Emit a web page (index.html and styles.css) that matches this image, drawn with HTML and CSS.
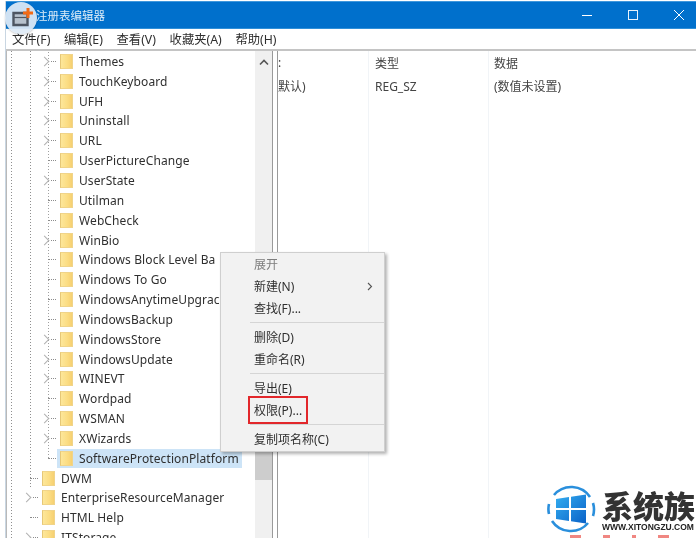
FILE: index.html
```html
<!DOCTYPE html>
<html lang="zh-CN">
<head>
<meta charset="utf-8">
<title>注册表编辑器</title>
<link rel="stylesheet" href="styles.css">
</head>
<body>
<div class="page">
<div class="window">
  <header class="titlebar">
    <span class="title">注册表编辑器</span>
    <div class="controls">
      <svg width="12" height="12" viewBox="0 0 12 12"><path d="M1 6.500h10" stroke="#fff" fill="none"/></svg>
      <svg width="12" height="12" viewBox="0 0 12 12"><rect x="1.500" y="1.500" width="9" height="9" stroke="#e8f2fb" fill="none"/></svg>
      <svg width="12" height="12" viewBox="0 0 12 12"><path d="M1 1l10 10M11 1L1 11" stroke="#fff" fill="none"/></svg>
    </div>
  </header>
  <nav class="menubar">
    <span>文件(F)</span><span>编辑(E)</span><span>查看(V)</span><span>收藏夹(A)</span><span>帮助(H)</span>
  </nav>
  <main class="panes">
    <section class="tree">
      <div class="list">
        <div class="sub">
          <div class="row arrow"><i class="chev"></i><div class="node"><i class="folder"></i><span>Themes</span></div></div>
          <div class="row arrow"><i class="chev"></i><div class="node"><i class="folder"></i><span>TouchKeyboard</span></div></div>
          <div class="row arrow"><i class="chev"></i><div class="node"><i class="folder"></i><span>UFH</span></div></div>
          <div class="row arrow"><i class="chev"></i><div class="node"><i class="folder"></i><span>Uninstall</span></div></div>
          <div class="row arrow"><i class="chev"></i><div class="node"><i class="folder"></i><span>URL</span></div></div>
          <div class="row"><i class="chev none"></i><div class="node"><i class="folder"></i><span>UserPictureChange</span></div></div>
          <div class="row arrow"><i class="chev"></i><div class="node"><i class="folder"></i><span>UserState</span></div></div>
          <div class="row"><i class="chev none"></i><div class="node"><i class="folder"></i><span>Utilman</span></div></div>
          <div class="row"><i class="chev none"></i><div class="node"><i class="folder"></i><span>WebCheck</span></div></div>
          <div class="row arrow"><i class="chev"></i><div class="node"><i class="folder"></i><span>WinBio</span></div></div>
          <div class="row"><i class="chev none"></i><div class="node"><i class="folder"></i><span>Windows Block Level Ba</span></div></div>
          <div class="row"><i class="chev none"></i><div class="node"><i class="folder"></i><span>Windows To Go</span></div></div>
          <div class="row"><i class="chev none"></i><div class="node"><i class="folder"></i><span>WindowsAnytimeUpgrac</span></div></div>
          <div class="row"><i class="chev none"></i><div class="node"><i class="folder"></i><span>WindowsBackup</span></div></div>
          <div class="row arrow"><i class="chev"></i><div class="node"><i class="folder"></i><span>WindowsStore</span></div></div>
          <div class="row arrow"><i class="chev"></i><div class="node"><i class="folder"></i><span>WindowsUpdate</span></div></div>
          <div class="row arrow"><i class="chev"></i><div class="node"><i class="folder"></i><span>WINEVT</span></div></div>
          <div class="row"><i class="chev none"></i><div class="node"><i class="folder"></i><span>Wordpad</span></div></div>
          <div class="row arrow"><i class="chev"></i><div class="node"><i class="folder"></i><span>WSMAN</span></div></div>
          <div class="row arrow"><i class="chev"></i><div class="node"><i class="folder"></i><span>XWizards</span></div></div>
          <div class="row"><i class="chev none"></i><div class="node selected"><i class="folder"></i><span>SoftwareProtectionPlatform</span></div></div>
        </div>
        <div class="row up"><i class="chev none"></i><div class="node"><i class="folder"></i><span>DWM</span></div></div>
        <div class="row up arrow"><i class="chev"></i><div class="node"><i class="folder"></i><span>EnterpriseResourceManager</span></div></div>
        <div class="row up"><i class="chev none"></i><div class="node"><i class="folder"></i><span>HTML Help</span></div></div>
        <div class="row up arrow"><i class="chev"></i><div class="node"><i class="folder"></i><span>ITStorage</span></div></div>
      </div>
      <div class="scrollbar">
        <svg width="10" height="7" viewBox="0 0 10 7"><path d="M1 5.500l4-4 4 4" stroke="#555" stroke-width="1.600" fill="none"/></svg>
        <div class="thumb"></div>
      </div>
    </section>
    <section class="values">
      <div class="col c1"><div class="cell">:</div><div class="cell">默认)</div></div>
      <div class="col c2"><div class="cell">类型</div><div class="cell">REG_SZ</div></div>
      <div class="col c3"><div class="cell">数据</div><div class="cell">(数值未设置)</div></div>
    </section>
  </main>
</div>

<div class="badge">
  <svg width="24" height="20" viewBox="0 0 24 20">
    <path d="M2.500 5h14v12h-14z" fill="#b7c1cc" stroke="#4d5561" stroke-width="2.400"/>
    <path d="M3 9.500h13" stroke="#4d5561" stroke-width="1.200"/>
    <path d="M17 0v10M12 5h10" stroke="#f26a16" stroke-width="3"/>
  </svg>
</div>

<div class="menu">
  <div class="item muted">展开</div>
  <div class="item"><span>新建(N)</span><svg width="6" height="9" viewBox="0 0 6 9"><path d="M1 1l3.500 3.500L1 8" stroke="#555" stroke-width="1.100" fill="none"/></svg></div>
  <div class="item">查找(F)...</div>
  <hr>
  <div class="item">删除(D)</div>
  <div class="item">重命名(R)</div>
  <hr>
  <div class="item">导出(E)</div>
  <div class="item"><span class="ring">权限(P)...</span></div>
  <hr>
  <div class="item">复制项名称(C)</div>
</div>

<div class="logo">
  <svg width="50" height="50" viewBox="0 0 50 50">
    <defs><linearGradient id="w" x1="0" y1="0" x2="1" y2="1"><stop offset="0" stop-color="#35aef0"/><stop offset="1" stop-color="#0a62c8"/></linearGradient></defs>
    <path d="M8 11A22.500 22.500 0 0 1 44 13" stroke="#2a8fdc" stroke-width="2.600" fill="none"/>
    <path d="M42 39A22.500 22.500 0 0 1 6 37M3 20A22 22 0 0 0 3 30" stroke="#2a8fdc" stroke-width="2.600" fill="none"/>
    <path d="M47 19a22 22 0 0 1 0 13" stroke="#2a8fdc" stroke-width="2.600" fill="none"/>
    <path d="M10 15l13-2v11H10zM25 12.700l15-2.200V24H25zM10 26h13v11l-13-2zM25 26h15v13.500l-15-2.200z" fill="url(#w)"/>
  </svg>
  <div class="brand">
    <span class="cn">系统族</span>
    <span class="url">WWW.XITONGZU.COM</span>
  </div>
</div>
<div class="marks"><i></i><i></i><i></i><i></i></div>
</div>
</body>
</html>
```
FILE: styles.css
```css
* { box-sizing: border-box; }
html, body { margin: 0; padding: 0; }
body { background: #fff; overflow: hidden; }
.page {
  width: 696px;
  height: 538px;
  overflow: hidden;
  position: relative;
  background: #fff;
  color: #2f2f2f;
  font: 12px "Noto Sans", "Noto Sans CJK SC", sans-serif;
  filter: blur(0.35px);
}
.window {
  margin: 1px 0 0 5px;
  height: 537px;
  border-left: 1px solid #c9d6e2;
  display: flex;
  flex-direction: column;
}
.titlebar {
  height: 28px;
  flex: none;
  background: #0070cc;
  border-top: 1px solid #3f97dc;
  border-bottom: 1px solid #2f8fd8;
  display: flex;
  align-items: center;
  justify-content: space-between;
  color: #dcecf8;
  padding-left: 30px;
}
.title { font-size: 11.500px; }
.controls { display: flex; gap: 34px; padding-right: 11px; }
.controls svg { display: block; }
.menubar {
  height: 22px;
  flex: none;
  display: flex;
  align-items: center;
  gap: 13.700px;
  padding-left: 6px;
  font-size: 12.300px;
  background: #fff;
  border-bottom: 2px solid #c4c4c4;
}
.panes { flex: 1; display: flex; min-height: 0; }
.tree {
  width: 267px;
  flex: none;
  display: flex;
  border-right: 1px solid #9a9a9a;
  border-left: 1px solid #b9b9b9;
  overflow: hidden;
}
.list {
  flex: 1;
  min-width: 0;
  overflow: hidden;
  padding-top: 0.500px;
  background-image:
    repeating-linear-gradient(#8f8f8f 0 1px, transparent 1px 3px),
    repeating-linear-gradient(#8f8f8f 0 1px, transparent 1px 3px);
  background-size: 1px 100%, 1px 436px;
  background-position: 4px 0, 23px 0;
  background-repeat: no-repeat;
}
.sub {
  background-image: repeating-linear-gradient(#a0a0a0 0 1px, transparent 1px 3px);
  background-size: 1px 407px;
  background-position: 41px 0;
  background-repeat: no-repeat;
}
.row {
  height: 19.850px;
  display: flex;
  align-items: center;
  padding-left: 36px;
  white-space: nowrap;
  font-size: 12px;
  letter-spacing: 0.100px;
}
.row.up { margin-left: -18px; }
.chev {
  width: 14px;
  height: 9px;
  flex: none;
  position: relative;
  display: block;
}
.row.arrow .chev::before {
  content: "";
  position: absolute;
  left: -2px;
  top: 1px;
  width: 6px;
  height: 6px;
  border-top: 1.500px solid #b0b0b0;
  border-right: 1.500px solid #b0b0b0;
  transform: rotate(45deg);
}
.chev::after {
  content: "";
  position: absolute;
  left: 8px;
  top: 4px;
  width: 5px;
  border-top: 1px dotted #8c8c8c;
}
.chev.none::after { left: 5px; width: 8px; }
.node {
  display: flex;
  align-items: center;
  height: 19px;
  padding: 0 3px;
}
.folder {
  width: 13px;
  height: 15px;
  flex: none;
  display: block;
  background: linear-gradient(90deg, #fde79a, #fbdc82 60%, #f6d071);
  border: 1px solid #f0d48a;
  border-left-color: #e6c777;
  margin-right: 6px;
}
.selected { background: #cde4f7; }
.scrollbar {
  width: 17px;
  flex: none;
  background: #f0f0f0;
  padding-top: 8px;
  display: flex;
  flex-direction: column;
  align-items: center;
}
.scrollbar svg { display: block; }
.thumb {
  margin-top: 214px;
  width: 17px;
  height: 200px;
  flex: none;
  background: #cdcdcd;
}
.values {
  flex: 1;
  margin-left: 4px;
  border-left: 1px solid #9a9a9a;
  min-width: 0;
  display: flex;
  color: #444;
}
.col { flex: none; height: 100%; }
.cell { height: 23.500px; display: flex; align-items: center; }
.c1 { width: 91px; border-right: 1px solid #f1f4f7; }
.c2 { width: 120px; border-right: 1px solid #f1f4f7; padding-left: 6px; }
.c3 { padding-left: 5px; }
.badge {
  position: absolute;
  left: 5px;
  top: 2px;
  width: 32px;
  height: 32px;
  border-radius: 50%;
  background: rgba(222, 234, 245, 0.93);
  box-shadow: 0 1px 2px rgba(0, 0, 0, 0.2);
  display: flex;
  align-items: center;
  justify-content: center;
  padding-left: 3px;
}
.badge svg { display: block; }
.menu {
  position: absolute;
  left: 220px;
  top: 252px;
  width: 165px;
  height: 200px;
  background: #f2f2f2;
  border: 1px solid #cfcfcf;
  box-shadow: 2px 2px 3px rgba(0, 0, 0, 0.3);
  padding: 0 0 0 33px;
  font-size: 12px;
  color: #2f2f2f;
}
.item {
  height: 22px;
  display: flex;
  align-items: center;
  justify-content: space-between;
  padding-right: 11px;
  white-space: nowrap;
}
.muted { color: #7d7d7d; }
.menu hr { border: 0; border-top: 1px solid #d5d5d5; margin: 3px 0 3px -4px; height: 0; }
.ring {
  outline: 2px solid #e2272b;
  padding: 3px 4px;
  margin-left: -4px;
}
.logo {
  position: absolute;
  left: 546px;
  top: 484px;
  display: flex;
  gap: 6px;
  width: 150px;
}
.logo svg { display: block; flex: none; }
.brand { display: flex; flex-direction: column; color: #333; white-space: nowrap; padding-top: 5px; width: 94px; }
.cn { font: 900 31px/31px "Noto Sans CJK SC", sans-serif; }
.url { font: 700 8.500px/10px "Liberation Sans", sans-serif; margin-top: 2px; color: #222; }
.marks { position: absolute; left: 570px; top: 535px; display: flex; gap: 22px; }
.marks i { display: block; width: 11px; height: 3px; background: #e8473f; opacity: 0.65; }
.marks i:nth-child(2) { width: 7px; }
.marks i:nth-child(3) { width: 4px; }
```
